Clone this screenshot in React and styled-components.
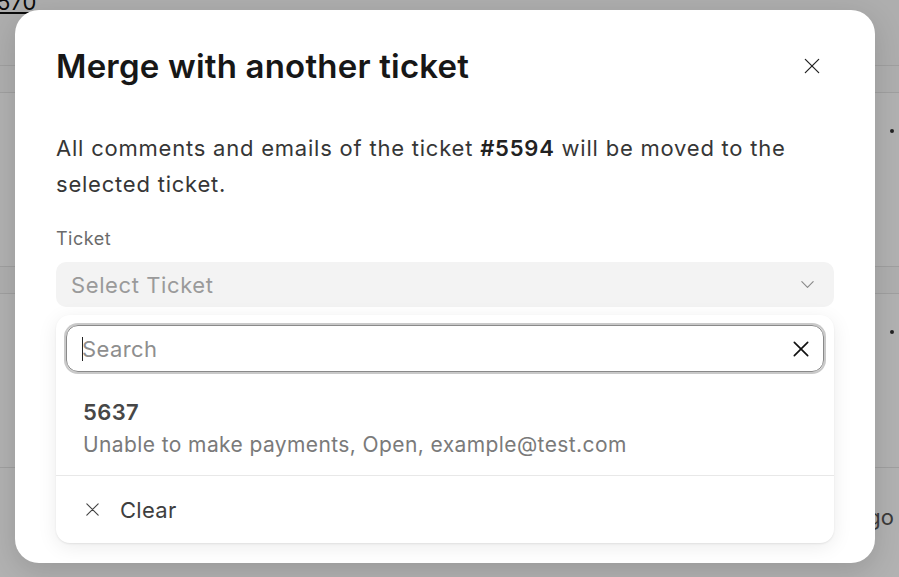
import React from 'react'
import styled, { createGlobalStyle } from 'styled-components'

const GlobalStyle = createGlobalStyle`
	html, body {
		margin: 0;
		padding: 0;
		width: 899px;
		height: 577px;
		overflow: hidden;
		font-family: Inter, "Noto Sans", sans-serif;
	}
`

const Page = styled.div`
	position: relative;
	width: 899px;
	height: 577px;
	background: #ffffff;
	overflow: hidden;
`

const PageTop = styled.div`
	display: flex;
	align-items: flex-start;
	height: 65px;
	background: #fafafa;
	border-bottom: 1px solid #e6e6e6;
	a {
		margin: -10px 0 0 -3px;
		font-size: 22px;
		line-height: 24px;
		color: #111;
		text-decoration: underline;
	}
`

const GroupBand = styled.div`
	height: 26px;
	background: #fbfbfb;
	border-bottom: 1px solid #e6e6e6;
`

const ListRow = styled.div`
	height: ${p => p.h}px;
	display: flex;
	justify-content: flex-end;
	padding: ${p => p.top}px 5px 0 0;
	box-sizing: border-box;
	border-bottom: 1px solid #e6e6e6;
	font-size: 22px;
	color: #555;
	span.dot {
		width: 4px;
		height: 4px;
		border-radius: 50%;
		background: #333;
	}
`

const Overlay = styled.div`
	position: absolute;
	inset: 0;
	background: rgba(0, 0, 0, 0.3);
	padding: 10px 24px 0 15px;
	box-sizing: border-box;
`

const Modal = styled.div`
	width: 860px;
	height: 553px;
	box-sizing: border-box;
	background: #fff;
	border-radius: 24px;
	box-shadow: 0 8px 30px rgba(0, 0, 0, 0.15);
	padding: 32px 41px 0 41px;
	display: flex;
	flex-direction: column;
`

const Header = styled.div`
	display: flex;
	align-items: center;
	justify-content: space-between;
	height: 48px;
`

const Title = styled.h2`
	margin: 0;
	font-size: 33px;
	font-weight: 600;
	color: #171717;
	letter-spacing: 0.2px;
`

const IconButton = styled.button`
	border: none;
	background: none;
	padding: 0;
	margin-right: 12px;
	display: flex;
	color: #222;
	cursor: pointer;
`

const Text = styled.p`
	margin: 40px 0 0;
	font-size: 22px;
	line-height: 36px;
	letter-spacing: 0.78px;
	color: #363636;
	b {
		color: #222;
		font-weight: 600;
	}
`

const Label = styled.div`
	margin-top: 27px;
	font-size: 18px;
	letter-spacing: 0.5px;
	color: #6b6b6b;
	line-height: 20px;
`

const Select = styled.div`
	margin-top: 13px;
	height: 45px;
	border-radius: 10px;
	background: #f3f3f3;
	display: flex;
	align-items: center;
	justify-content: space-between;
	padding: 0 18px 0 15px;
	font-size: 22px;
	letter-spacing: 0.6px;
	color: #9a9a9a;
`

const Dropdown = styled.div`
	margin-top: 8px;
	border-radius: 14px;
	background: #fff;
	box-shadow: 0 1px 2px rgba(0, 0, 0, 0.08), 0 4px 20px rgba(0, 0, 0, 0.08);
	padding: 10px 10px 0;
	display: flex;
	flex-direction: column;
`

const Search = styled.div`
	height: 47px;
	box-sizing: border-box;
	border-radius: 12px;
	border: 1px solid #8a8a8a;
	box-shadow: 0 0 0 2px #c9c9c9;
	display: flex;
	align-items: center;
	padding: 0 12px 0 15px;
	input {
		flex: 1;
		border: none;
		outline: none;
		background: none;
		font-family: inherit;
		font-size: 22px;
		letter-spacing: 0.4px;
		color: #222;
		padding: 0;
	}
	input::placeholder {
		color: #8e8e8e;
	}
	span.caret {
		width: 1px;
		height: 24px;
		background: #222;
		margin-right: -1px;
	}
`

const Option = styled.div`
	margin: 0 -10px;
	padding: 27px 17px 18px 27px;
	border-bottom: 1px solid #e8e8e8;
	strong {
		display: block;
		font-size: 22px;
		font-weight: 600;
		letter-spacing: 0.4px;
		color: #474747;
		line-height: 26px;
	}
	span {
		display: block;
		margin-top: 8px;
		font-size: 21px;
		letter-spacing: 0.4px;
		color: #7a7a7a;
		line-height: 24px;
	}
`

const ClearRow = styled.div`
	height: 67px;
	display: flex;
	align-items: center;
	gap: 19px;
	padding-left: 18px;
	font-size: 22px;
	letter-spacing: 0.3px;
	color: #3e3e3e;
`

const XIcon = ({ size = 18, stroke = 1.6, color = 'currentColor' }) => (
	<svg width={size} height={size} viewBox="0 0 24 24" fill="none" stroke={color} strokeWidth={stroke} strokeLinecap="round">
		<path d="M4 4l16 16M20 4L4 20" />
	</svg>
)

const Chevron = () => (
	<svg width="17" height="17" viewBox="0 0 24 24" fill="none" stroke="#888" strokeWidth="1.6" strokeLinecap="round" strokeLinejoin="round">
		<path d="M4 8l8 8 8-8" />
	</svg>
)

export default function App() {
	return (
		<>
			<GlobalStyle />
			<Page>
				<PageTop><a>570</a></PageTop>
				<GroupBand />
				<ListRow h={174} top={36}><span className="dot" /></ListRow>
				<GroupBand />
				<ListRow h={174} top={36}><span className="dot" /></ListRow>
				<ListRow h={110} top={36}>ago</ListRow>

				<Overlay>
					<Modal>
						<Header>
							<Title>Merge with another ticket</Title>
							<IconButton aria-label="Close"><XIcon size={20} stroke={1.5} /></IconButton>
						</Header>
						<Text>
							All comments and emails of the ticket <b>#5594</b> will be moved to the selected ticket.
						</Text>
						<Label>Ticket</Label>
						<Select>
							<span>Select Ticket</span>
							<Chevron />
						</Select>
						<Dropdown>
							<Search>
								<span className="caret" />
								<input placeholder="Search" />
								<XIcon size={20} stroke={2} color="#111" />
							</Search>
							<Option>
								<strong>5637</strong>
								<span>Unable to make payments, Open, example@test.com</span>
							</Option>
							<ClearRow>
								<XIcon size={17} stroke={1.6} color="#444" />
								Clear
							</ClearRow>
						</Dropdown>
					</Modal>
				</Overlay>
			</Page>
		</>
	)
}
